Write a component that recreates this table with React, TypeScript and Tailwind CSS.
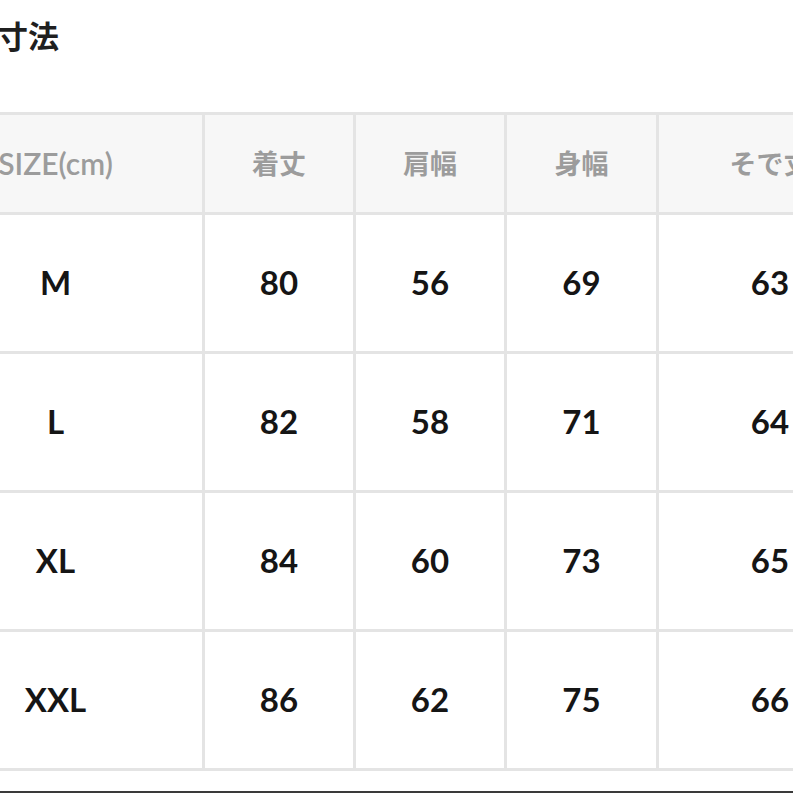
import React from 'react'

const headers = ['SIZE(cm)', '着丈', '肩幅', '身幅', 'そで丈']

const rows = [
  ['M', '80', '56', '69', '63'],
  ['L', '82', '58', '71', '64'],
  ['XL', '84', '60', '73', '65'],
  ['XXL', '86', '62', '75', '66'],
]

const font = { fontFamily: 'Lato, "Noto Sans CJK JP", sans-serif' }

export default function App() {
  return (
    <div className="relative h-[793px] w-[793px] overflow-hidden bg-white" style={font}>
      <div className="flex h-[68px] items-center pl-0">
        <h2 className="-ml-[3px] text-[31px] font-bold leading-none text-[#1f1f1f]" style={{ fontFamily: '"Noto Sans CJK JP", sans-serif' }}>
          寸法
        </h2>
      </div>

      <div className="mt-[44px] -ml-[91px] w-[1000px]">
        <div className="grid grid-cols-[293px_148px_148px_149px_222px] gap-[3px] border-y-[3px] border-[#e4e4e4] bg-[#e4e4e4]">
          {headers.map((h) => (
            <div
              key={h}
              className="flex h-[97px] items-center justify-center bg-[#f7f7f7] text-[27px] font-bold text-[#9c9c9c]"
              style={h === 'SIZE(cm)' ? { fontFamily: 'Lato, sans-serif', fontSize: '30px', fontWeight: 600 } : { fontFamily: '"Noto Sans CJK JP", sans-serif' }}
            >
              {h}
            </div>
          ))}
          {rows.map((row) =>
            row.map((cell, i) => (
              <div
                key={row[0] + i}
                className="flex h-[136px] items-center justify-center bg-white text-[33px] font-bold text-[#151515]"
              >
                {cell}
              </div>
            ))
          )}
        </div>
      </div>

      <div className="absolute bottom-0 left-0 h-[2px] w-full bg-[#3a3a3a]" />
    </div>
  )
}
